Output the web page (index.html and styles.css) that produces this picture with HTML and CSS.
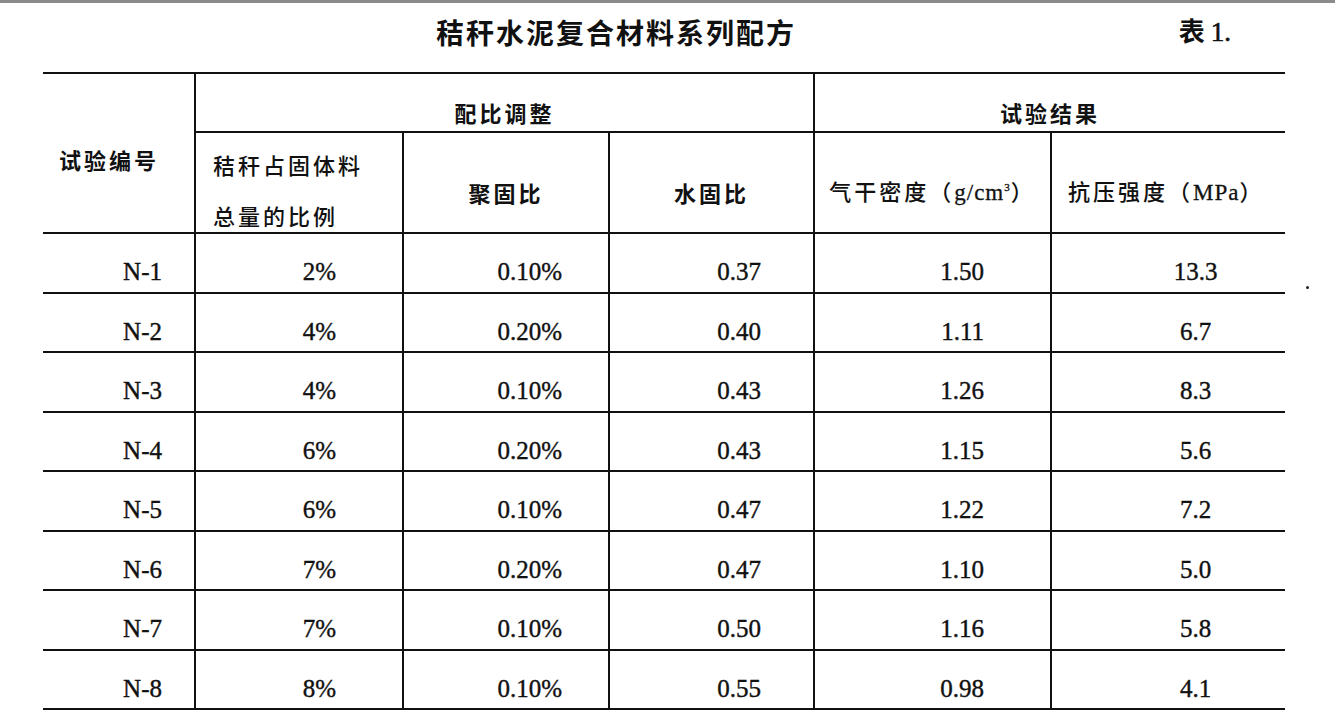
FILE: index.html
```html
<!DOCTYPE html>
<html lang="zh-CN">
<head>
<meta charset="utf-8">
<title>秸秆水泥复合材料系列配方</title>
<link rel="stylesheet" href="styles.css">
</head>
<body>
<div class="page">
  <div class="caption">
    <h1 class="title">秸秆水泥复合材料系列配方</h1>
    <span class="tabno">表 <span class="tabnum">1.</span></span>
  </div>
  <div class="table-wrap">
    <table class="recipe">
      <colgroup>
        <col class="c1"><col class="c2"><col class="c3"><col class="c4"><col class="c5"><col class="c6">
      </colgroup>
      <thead>
        <tr class="h1">
          <th rowspan="2" class="id-head">试验编号</th>
          <th colspan="3" class="group g-ratio">配比调整</th>
          <th colspan="2" class="group g-result">试验结果</th>
        </tr>
        <tr class="h2">
          <th class="straw"><span class="line">秸秆占固体料</span><span class="line">总量的比例</span></th>
          <th>聚固比</th>
          <th>水固比</th>
          <th class="density">气干密度（<span class="lat">g/cm<sup>3</sup></span>）</th>
          <th class="strength">抗压强度（<span class="lat">MPa</span>）</th>
        </tr>
      </thead>
      <tbody>
        <tr><td>N-1</td><td>2%</td><td>0.10%</td><td>0.37</td><td>1.50</td><td>13.3</td></tr>
        <tr><td>N-2</td><td>4%</td><td>0.20%</td><td>0.40</td><td>1.11</td><td>6.7</td></tr>
        <tr><td>N-3</td><td>4%</td><td>0.10%</td><td>0.43</td><td>1.26</td><td>8.3</td></tr>
        <tr><td>N-4</td><td>6%</td><td>0.20%</td><td>0.43</td><td>1.15</td><td>5.6</td></tr>
        <tr><td>N-5</td><td>6%</td><td>0.10%</td><td>0.47</td><td>1.22</td><td>7.2</td></tr>
        <tr><td>N-6</td><td>7%</td><td>0.20%</td><td>0.47</td><td>1.10</td><td>5.0</td></tr>
        <tr><td>N-7</td><td>7%</td><td>0.10%</td><td>0.50</td><td>1.16</td><td>5.8</td></tr>
        <tr><td>N-8</td><td>8%</td><td>0.10%</td><td>0.55</td><td>0.98</td><td>4.1</td></tr>
      </tbody>
    </table>
    <span class="speck"></span>
  </div>
</div>
</body>
</html>
```

FILE: styles.css
```css
html, body {
  margin: 0;
  padding: 0;
  background: #ffffff;
}

body {
  font-family: "Noto Sans CJK SC", "Noto Sans", sans-serif;
  color: #111111;
}

.page {
  width: 1335px;
  height: 722px;
  border-top: 3px solid #8a8a8a;
  box-sizing: border-box;
  overflow: hidden;
}

.caption {
  display: flex;
  align-items: center;
  height: 69px;
  padding-left: 436px;
  padding-right: 100px;
  padding-bottom: 12px;
  box-sizing: border-box;
}

.title {
  margin: 0;
  font-size: 28px;
  font-weight: 700;
  letter-spacing: 2px;
  line-height: 1;
  color: #111;
}

.tabno {
  margin-left: auto;
  font-size: 26px;
  font-weight: 700;
  line-height: 1;
  color: #111;
  margin-right: 4px;
}

.tabnum {
  font-family: "Liberation Serif", serif;
  font-weight: 400;
  font-size: 27px;
  -webkit-text-stroke: 0.6px #111;
}

.table-wrap {
  position: relative;
  padding-left: 43px;
}

.recipe {
  border-collapse: collapse;
  table-layout: fixed;
  width: 1242px;
}

.c1 { width: 152px; }
.c2 { width: 208px; }
.c3 { width: 206px; }
.c4 { width: 205px; }
.c5 { width: 237px; }
.c6 { width: 234px; }

.recipe th,
.recipe td {
  border: 2px solid #111;
  padding: 0;
}

.recipe tr > :first-child { border-left: none; }
.recipe tr > :last-child { border-right: none; }

.recipe th {
  font-family: "Noto Sans CJK SC", sans-serif;
  font-weight: 700;
  font-size: 22px;
  letter-spacing: 3px;
  line-height: 26px;
  text-align: center;
  vertical-align: middle;
  color: #111;
  box-sizing: border-box;
}

.h1 th { height: 59px; padding-top: 18px; }
.h2 th { height: 101px; padding-top: 18px; }

.h1 .id-head {
  padding-top: 12px;
  padding-right: 19px;
}

.g-ratio { padding-left: 56px; }
.g-result { padding-left: 52px; }

.h2 .straw {
  text-align: left;
  padding-left: 17px;
  padding-top: 14px;
  font-weight: 500;
}

.straw .line {
  display: block;
}

.straw .line + .line {
  margin-top: 25px;
}

.h2 .density,
.h2 .strength {
  font-weight: 500;
}

.h2 .strength {
  text-align: left;
  padding-left: 16px;
}

.lat {
  font-family: "Liberation Serif", serif;
  font-size: 23px;
  letter-spacing: 1px;
  font-weight: 400;
  -webkit-text-stroke: 0.3px #111;
}

.lat sup {
  font-size: 11px;
  vertical-align: 9px;
  line-height: 0;
}

.recipe td {
  height: 59.5px;
  box-sizing: border-box;
  padding-top: 19px;
  font-family: "Liberation Serif", serif;
  font-size: 25px;
  line-height: 26px;
  text-align: right;
  vertical-align: middle;
  color: #111;
  -webkit-text-stroke: 0.4px #111;
}

.recipe td:nth-child(1) { padding-right: 32px; }
.recipe td:nth-child(2) { padding-right: 66px; }
.recipe td:nth-child(3) { padding-right: 46px; }
.recipe td:nth-child(4) { padding-right: 52px; }
.recipe td:nth-child(5) { padding-right: 66px; }
.recipe td:nth-child(6) { text-align: center; padding-left: 54px; }

.speck {
  position: absolute;
  left: 1306px;
  top: 214px;
  width: 3px;
  height: 3px;
  border-radius: 50%;
  background: #222;
}
```
